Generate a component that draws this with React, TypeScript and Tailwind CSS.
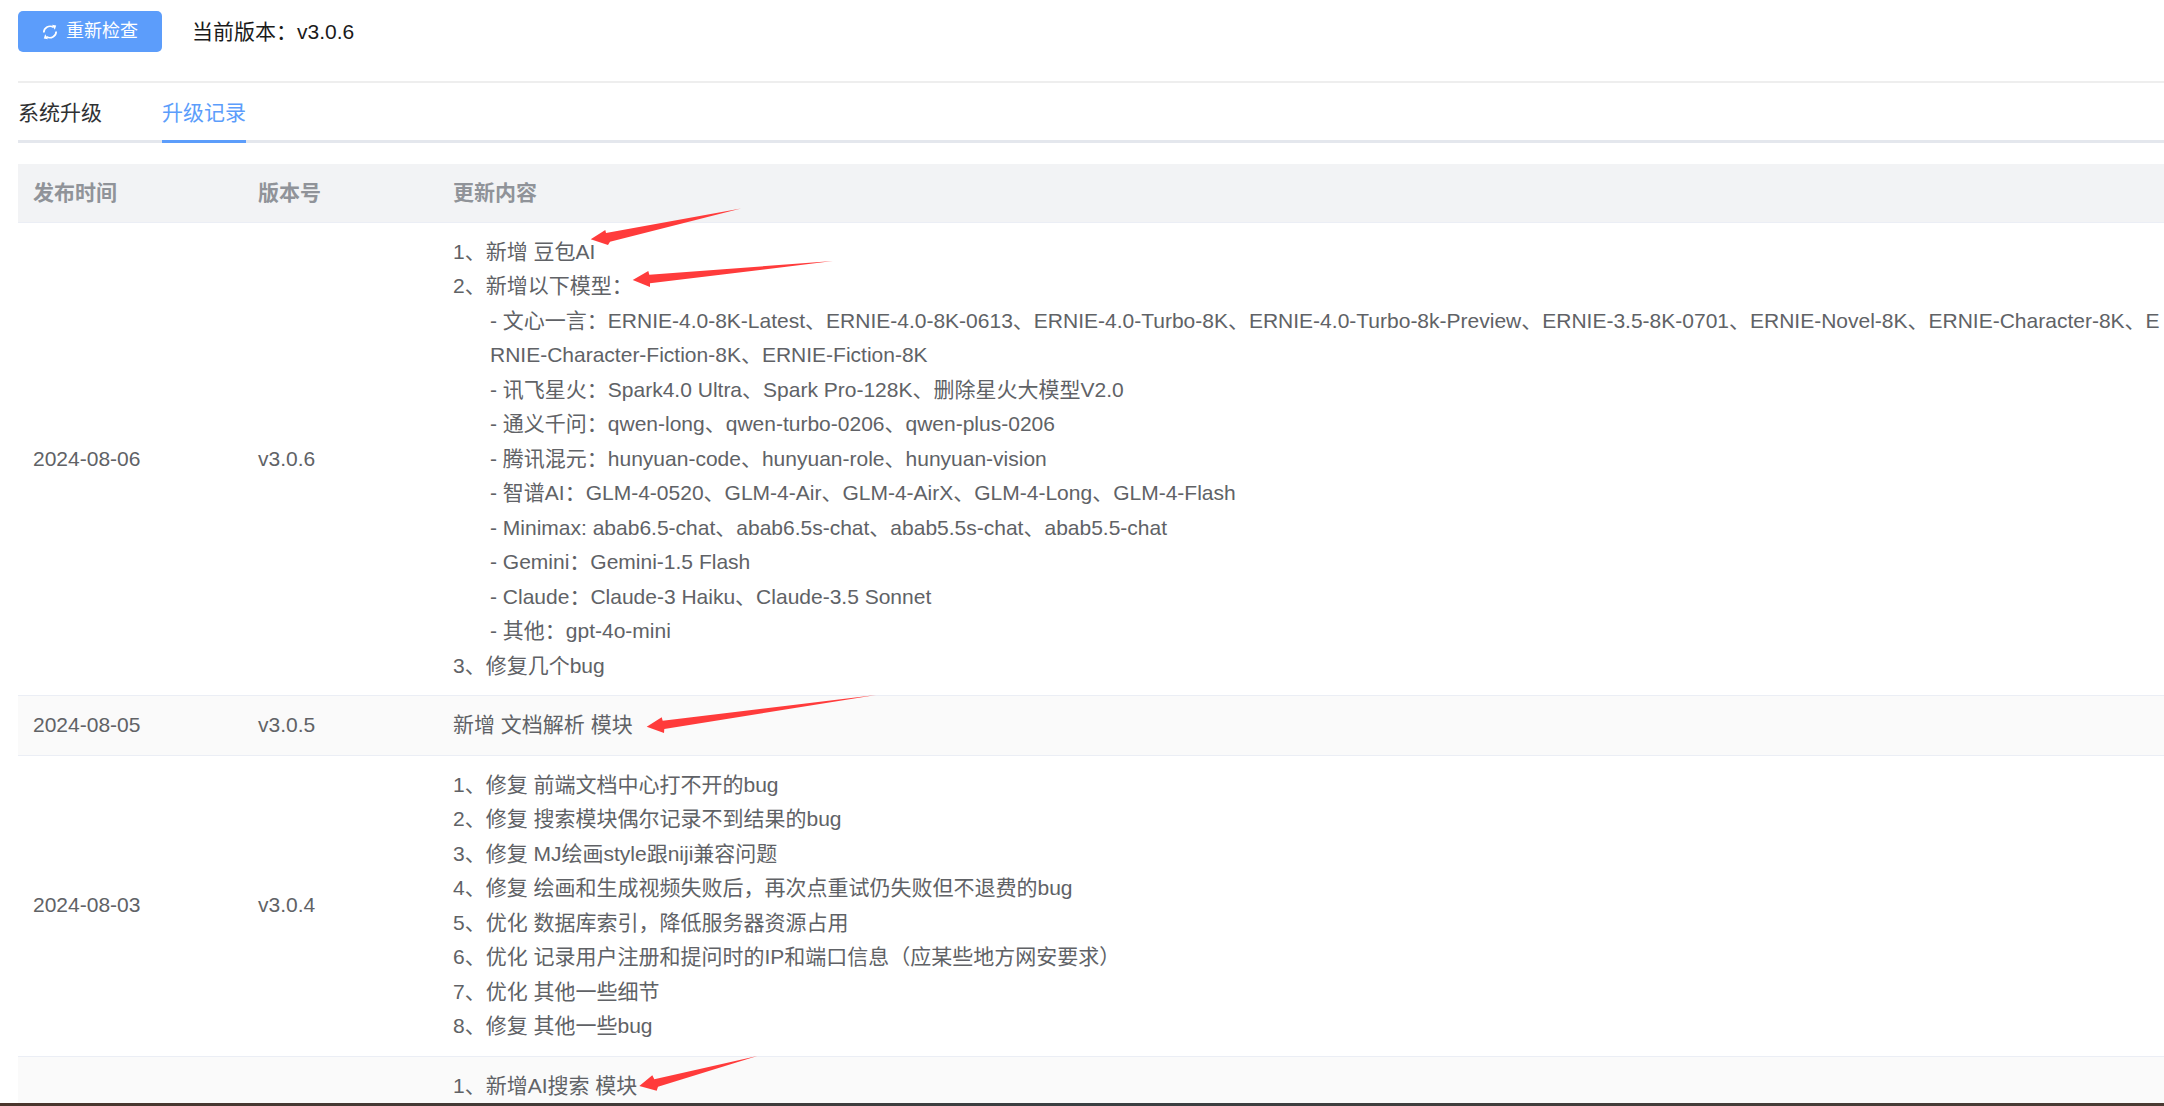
const updates = [
  {
    date: "2024-08-06",
    version: "v3.0.6",
    lines: [
      { text: "1、新增 豆包AI" },
      { text: "2、新增以下模型：" },
      { text: "- 文心一言：ERNIE-4.0-8K-Latest、ERNIE-4.0-8K-0613、ERNIE-4.0-Turbo-8K、ERNIE-4.0-Turbo-8k-Preview、ERNIE-3.5-8K-0701、ERNIE-Novel-8K、ERNIE-Character-8K、ERNIE-Character-Fiction-8K、ERNIE-Fiction-8K", sub: true },
      { text: "- 讯飞星火：Spark4.0 Ultra、Spark Pro-128K、删除星火大模型V2.0", sub: true },
      { text: "- 通义千问：qwen-long、qwen-turbo-0206、qwen-plus-0206", sub: true },
      { text: "- 腾讯混元：hunyuan-code、hunyuan-role、hunyuan-vision", sub: true },
      { text: "- 智谱AI：GLM-4-0520、GLM-4-Air、GLM-4-AirX、GLM-4-Long、GLM-4-Flash", sub: true },
      { text: "- Minimax: abab6.5-chat、abab6.5s-chat、abab5.5s-chat、abab5.5-chat", sub: true },
      { text: "- Gemini：Gemini-1.5 Flash", sub: true },
      { text: "- Claude：Claude-3 Haiku、Claude-3.5 Sonnet", sub: true },
      { text: "- 其他：gpt-4o-mini", sub: true },
      { text: "3、修复几个bug" },
    ],
  },
  {
    date: "2024-08-05",
    version: "v3.0.5",
    lines: [{ text: "新增 文档解析 模块" }],
  },
  {
    date: "2024-08-03",
    version: "v3.0.4",
    lines: [
      { text: "1、修复 前端文档中心打不开的bug" },
      { text: "2、修复 搜索模块偶尔记录不到结果的bug" },
      { text: "3、修复 MJ绘画style跟niji兼容问题" },
      { text: "4、修复 绘画和生成视频失败后，再次点重试仍失败但不退费的bug" },
      { text: "5、优化 数据库索引，降低服务器资源占用" },
      { text: "6、优化 记录用户注册和提问时的IP和端口信息（应某些地方网安要求）" },
      { text: "7、优化 其他一些细节" },
      { text: "8、修复 其他一些bug" },
    ],
  },
  {
    // date and version sit below the fold in the screenshot
    date: "",
    version: "",
    lines: [{ text: "1、新增AI搜索 模块" }],
  },
];

// red annotation arrows drawn over the page
const arrows = [
  "590.7,239.3 605.3,230 606,233 741,208.5 610,241.7 608,245",
  "632.7,280 648.3,271 649.3,274.7 833,261 650,283.3 650,287",
  "646.7,726.7 661.7,717.3 662.7,720.7 876,695 664.3,729 664,733",
  "639.3,1086 652.3,1075.3 654.3,1079.3 757.3,1056 658,1086.7 656.7,1090.7",
];

const RefreshIcon = () => (
  <svg width="16" height="16" viewBox="0 0 16 16" fill="none" className="shrink-0">
    <path d="M1.8 8.5a6.2 6.2 0 0 1 9.7-5.1" stroke="white" strokeWidth="1.7" />
    <path d="M14.2 7.5a6.2 6.2 0 0 1-9.7 5.1" stroke="white" strokeWidth="1.7" />
    <path d="M10 .8 14.2 1.6l-1.4 4.2z" fill="white" />
    <path d="M6 15.2 1.8 14.4l1.4-4.2z" fill="white" />
  </svg>
);

export default function App() {
  return (
    <div className="relative flex h-[1106px] w-[2164px] flex-col overflow-hidden bg-white font-['Liberation_Sans','Noto_Sans_CJK_SC',sans-serif]">
      <div className="min-h-0 flex-1 overflow-hidden pl-[18px]">
        <div className="flex h-[83px] items-start border-b-2 border-[#eeeeee]">
          <div className="mt-[11px] flex items-center">
            <button className="flex h-[41px] w-[144px] items-center justify-center gap-[8px] rounded-[5px] bg-[#5c9dfb] text-[18px] text-white">
              <RefreshIcon />
              重新检查
            </button>
            <span className="ml-[30px] text-[21px] text-[#1a1a1a]">当前版本：v3.0.6</span>
          </div>
        </div>

        <div className="flex h-[60px] gap-[60px] border-b-[3px] border-[#e4e7ed] text-[21px]">
          <div className="pt-[14px] text-[#303133]">系统升级</div>
          <div className="-mb-[3px] border-b-[3px] border-[#5c9dfb] pt-[14px] text-[#5c9dfb]">升级记录</div>
        </div>

        <div className="mt-[21px] text-[21px] leading-[34.5px] text-[#606266]">
          <div className="grid h-[58.5px] grid-cols-[225px_195px_1fr] items-center border-b border-[#ebeef5] bg-[#f2f3f5] font-bold text-[#909399]">
            <div className="pl-[15px]">发布时间</div>
            <div className="pl-[15px]">版本号</div>
            <div className="pl-[15px]">更新内容</div>
          </div>
          {updates.map((row, i) => (
            <div
              key={i}
              className={`grid grid-cols-[225px_195px_1fr] items-center border-b border-[#ebeef5] ${i % 2 === 1 ? "bg-[#fafafa]" : "bg-white"}`}
            >
              <div className="pl-[15px]">{row.date}</div>
              <div className="pl-[15px]">{row.version}</div>
              <div className="py-[12px] pl-[15px] break-all">
                {row.lines.map((line) => (
                  <div key={line.text} className={line.sub ? "pl-[37px]" : ""}>
                    {line.text}
                  </div>
                ))}
              </div>
            </div>
          ))}
        </div>
      </div>
      <div className="h-[3px] shrink-0 bg-linear-to-r from-[#4a352c] via-[#3a3f42] to-[#4a3a32]" />

      <svg className="pointer-events-none absolute top-0 left-0" width="2164" height="1106">
        {arrows.map((points) => (
          <polygon key={points} points={points} fill="#ff3b3b" />
        ))}
      </svg>
    </div>
  );
}
